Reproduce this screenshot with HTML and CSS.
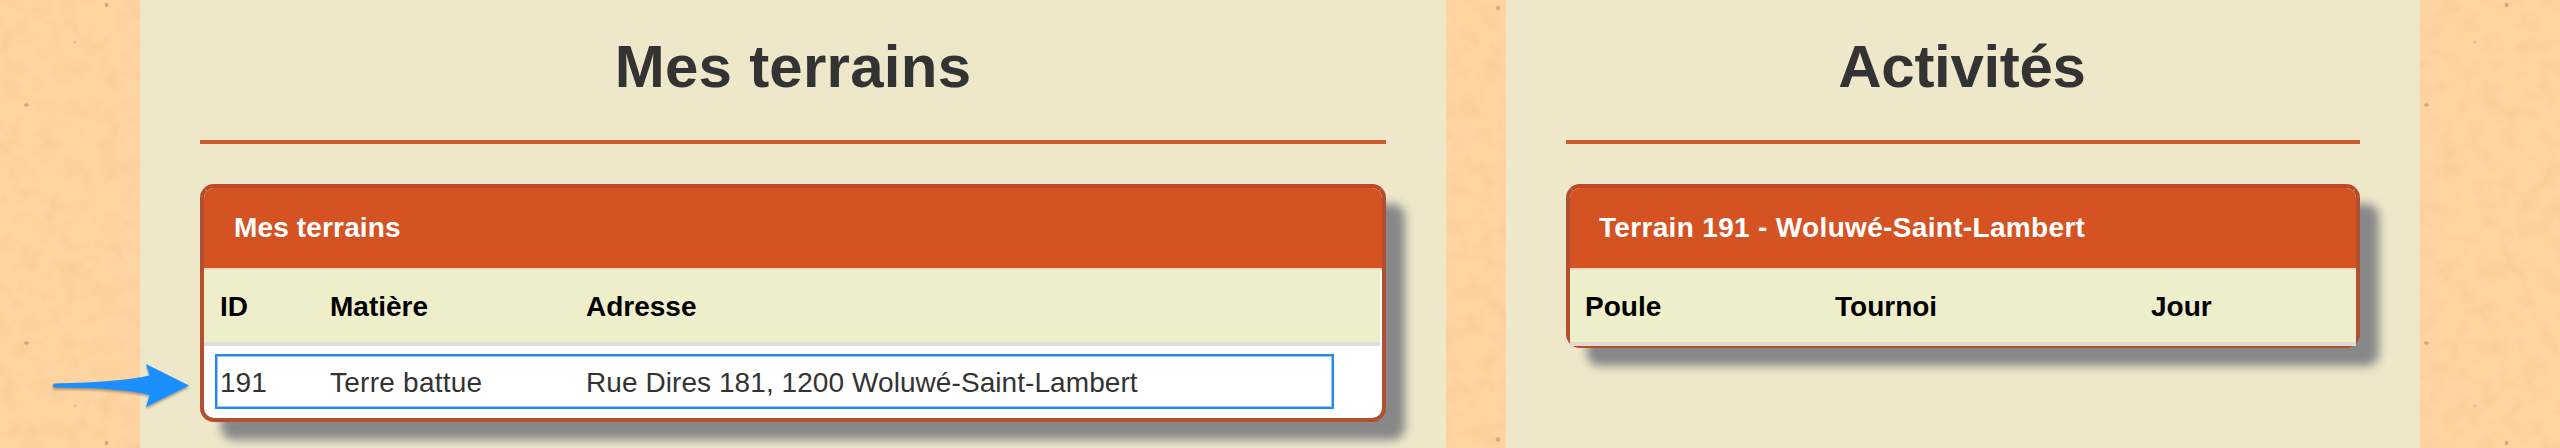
FILE: index.html
```html
<!DOCTYPE html>
<html lang="fr">
<head>
<meta charset="utf-8">
<title>Mes terrains</title>
<link rel="stylesheet" href="styles.css">
</head>
<body>
<svg class="paper" width="2560" height="448" aria-hidden="true">
  <defs>
    <filter id="grain" x="0" y="0" width="100%" height="100%" color-interpolation-filters="sRGB">
      <feTurbulence type="fractalNoise" baseFrequency="0.05" numOctaves="3" seed="7"/>
      <feColorMatrix values="0 0 0 0 .93  0 0 0 0 .72  0 0 0 0 .52  .5 0 0 0 -.16"/>
    </filter>
    <g id="specks" fill="#b98a58" fill-opacity=".6">
      <ellipse cx="106.500" cy="5" rx="1.800" ry="2.200"/>
      <ellipse cx="106.500" cy="443" rx="1.800" ry="2.200"/>
      <ellipse cx="26.500" cy="105" rx="2.400" ry="1.800"/>
      <ellipse cx="26.500" cy="343" rx="2.400" ry="1.800"/>
      <circle cx="75" cy="42" r="1.500" fill-opacity=".35"/>
      <circle cx="75" cy="406" r="1.500" fill-opacity=".35"/>
    </g>
  </defs>
  <rect width="2560" height="448" filter="url(#grain)"/>
  <use href="#specks"/>
  <use href="#specks" x="2400"/>
  <g fill="#c08a4c" fill-opacity=".55">
    <circle cx="1498" cy="8" r="2.300"/>
    <circle cx="1498" cy="439.500" r="2.300"/>
  </g>
</svg>
<main class="page">
  <section class="panel panel-courts">
    <h1 class="panel-title">Mes terrains</h1>
    <div class="card">
      <h2 class="card-title">Mes terrains</h2>
      <table class="grid grid-courts">
        <thead><tr><th class="col-id">ID</th><th class="col-surface">Matière</th><th>Adresse</th></tr></thead>
        <tbody><tr><td>191</td><td class="surface">Terre battue</td><td class="address">Rue Dires 181, 1200 Woluwé-Saint-Lambert</td></tr></tbody>
      </table>
      <div class="highlight"></div>
    </div>
    <svg class="arrow" width="146" height="56" viewBox="0 0 146 56" aria-hidden="true">
      <path d="M3 23.500 Q70 22 98.500 15.500 L95 4 L138 25.500 L95 47 L98.500 35 Q70 27.500 3 27.500 Q1 25.500 3 23.500Z" fill="#1b8fff"/>
    </svg>
  </section>
  <section class="panel panel-activities">
    <h1 class="panel-title title-activities">Activités</h1>
    <div class="card card-empty">
      <h2 class="card-title title-wide">Terrain 191 - Woluwé-Saint-Lambert</h2>
      <table class="grid">
        <thead><tr><th class="col-pool">Poule</th><th class="col-tournament">Tournoi</th><th>Jour</th></tr></thead>
      </table>
    </div>
  </section>
</main>
</body>
</html>
```

FILE: styles.css
```css
* { box-sizing: border-box; }

body {
  margin: 0;
  height: 448px;
  overflow: hidden;
  background: #ffd6a3;
  color: #333;
  font: 28px/40px "Liberation Sans", Arial, sans-serif;
}

.paper {
  position: absolute;
  top: 0;
  left: 0;
  z-index: -1;
}

.page {
  display: flex;
  gap: 60px;
  height: 448px;
  padding: 0 140px;
}

.panel {
  position: relative;
  height: 448px;
  padding: 0 60px;
  background: #eee7ca;
}

.panel-courts { width: 1306px; }
.panel-activities { width: 914px; }

.panel-title {
  height: 144px;
  margin: 0 0 40px;
  padding-top: 31px;
  border-bottom: 4px solid #cb5a2d;
  font-size: 60px;
  line-height: 72px;
  letter-spacing: 0.25px;
  text-align: center;
}

.title-activities {
  padding-right: 2px;
  letter-spacing: -0.3px;
}

.card {
  position: relative;
  height: 238px;
  border: 4px solid #b05030;
  border-top-color: #bc4a24;
  border-radius: 14px;
  background: #fff;
  box-shadow: 20px 19px 10px -1px #888;
}

.card-title {
  height: 82px;
  margin: 0;
  padding: 20px 30px 0;
  border-bottom: 2px solid #f2d9c8;
  border-radius: 10px 10px 0 0;
  background: #d55323;
  color: #fff;
  font-size: 28px;
  line-height: 40px;
  letter-spacing: 0.15px;
}

.title-wide {
  padding-left: 29px;
  letter-spacing: 0.33px;
}

.grid {
  width: 100%;
  border-collapse: separate;
  border-spacing: 0;
  table-layout: fixed;
}

.grid-courts { width: 1176px; }

th {
  height: 76px;
  padding: 1px 0 0 16px;
  border-bottom: 4px solid #ddd;
  background: #eeeecb;
  color: #000;
  text-align: left;
}

td {
  height: 72px;
  padding: 1px 0 0 16px;
}

.surface { letter-spacing: 0.25px; }
.address { letter-spacing: 0.07px; }

.col-id { width: 110px; }
.col-surface { width: 256px; }
.col-pool { width: 250px; }
.col-tournament { width: 316px; }

.card-empty { height: 164px; }

.card-empty th {
  padding-left: 15px;
  border-bottom-color: #e2d8d0;
}

.highlight {
  position: absolute;
  top: 166px;
  left: 11px;
  width: 1119px;
  height: 55px;
  border: 2px solid #2488f0;
  box-shadow: inset 0 0 0 1px rgba(43, 143, 243, .5);
}

.arrow {
  position: absolute;
  top: 360px;
  left: -89px;
  filter: drop-shadow(0 2px 1px rgba(0, 0, 0, .3));
}
```
